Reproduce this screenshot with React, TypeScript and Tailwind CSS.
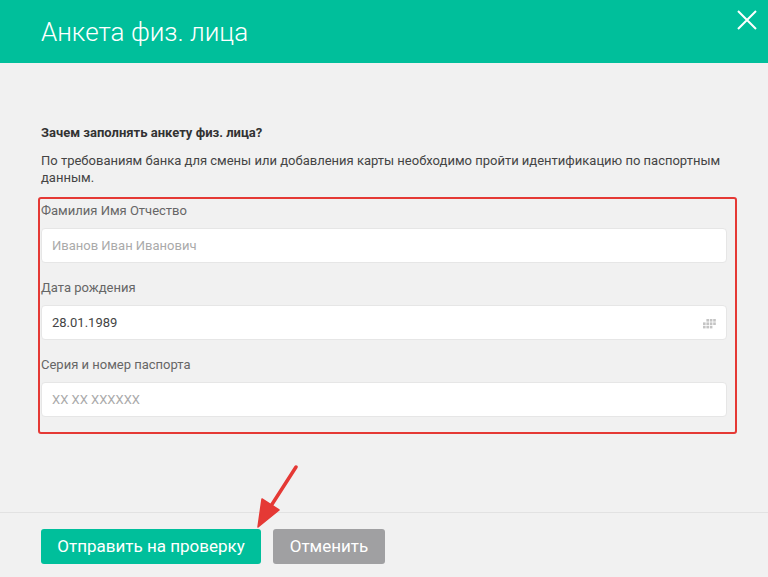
import React from "react";

function CalendarIcon() {
  const cells: [number, number][] = [
    [1, 0], [2, 0], [3, 0],
    [0, 1], [1, 1], [2, 1], [3, 1],
    [0, 2], [1, 2], [2, 2],
  ];
  return (
    <svg width="14" height="10" viewBox="0 0 14 10" className="absolute right-[9px] top-[13px]">
      {cells.map(([x, y], i) => (
        <rect key={i} x={x * 3.4} y={y * 3.4} width="2.6" height="2.6" fill="#c4c4c4" />
      ))}
    </svg>
  );
}

function Field({ label, placeholder, value, icon }: { label: string; placeholder?: string; value?: string; icon?: boolean }) {
  return (
    <div className="flex flex-col">
      <label className="text-[13px] leading-[16px] text-[#666]">{label}</label>
      <div className="relative mt-[9px] h-[35px] rounded-[4px] border border-[#e6e6e6] bg-white">
        <input
          readOnly
          placeholder={placeholder}
          defaultValue={value}
          className="h-full w-full rounded-[4px] bg-transparent pl-[10px] text-[13px] text-[#444] placeholder:text-[#aaa] outline-none"
          style={{ fontFamily: "Roboto, 'Noto Sans', sans-serif" }}
        />
        {icon && <CalendarIcon />}
      </div>
    </div>
  );
}

export default function App() {
  return (
    <div
      className="relative h-[577px] w-[768px] overflow-hidden bg-[#f1f1f1]"
      style={{ fontFamily: "Roboto, 'Noto Sans', sans-serif" }}
    >
      <header className="flex h-[63px] items-center justify-between bg-[#00bf9b] pl-[41px] pr-[11px]">
        <h1 className="text-[26px] font-light leading-none text-white">Анкета физ. лица</h1>
        <svg width="20" height="20" viewBox="0 0 20 20" className="-mt-[24px]">
          <path d="M1 1 L19 19 M19 1 L1 19" stroke="white" strokeWidth="2" />
        </svg>
      </header>

      <main className="px-[41px] pt-[62px]">
        <h2 className="text-[13px] font-bold leading-[16px] text-[#333]">Зачем заполнять анкету физ. лица?</h2>
        <p className="mt-[11px] text-[13px] leading-[17px] text-[#444]">
          По требованиям банка для смены или добавления карты необходимо пройти идентификацию по паспортным данным.
        </p>

        <div className="relative mt-[11px] flex flex-col gap-[17px] pt-[6px] pb-[17px]">
          <Field label="Фамилия Имя Отчество" placeholder="Иванов Иван Иванович" />
          <Field label="Дата рождения" value="28.01.1989" icon />
          <Field label="Серия и номер паспорта" placeholder="XX XX XXXXXX" />
          <div className="pointer-events-none absolute -left-[3px] -right-[10px] top-0 bottom-0 rounded-[3px] border-2 border-[#e53935]" />
        </div>
      </main>

      <footer className="absolute bottom-0 left-0 right-0 top-[512px] border-t border-[#e2e2e2] px-[41px] pt-[16px]">
        <div className="flex gap-[12px]">
          <button className="h-[35px] w-[220px] rounded-[3px] bg-[#00bf9b] text-[17px] text-white">
            Отправить на проверку
          </button>
          <button className="h-[35px] w-[112px] rounded-[3px] bg-[#a0a0a2] text-[17px] text-white">
            Отменить
          </button>
        </div>
      </footer>

      <svg className="pointer-events-none absolute left-0 top-0" width="768" height="577" viewBox="0 0 768 577">
        <path d="M296 467 L269 509" stroke="#e53935" strokeWidth="3.5" strokeLinecap="round" />
        <path d="M258 527 L262 499 L279 510 Z" fill="#e53935" stroke="#e53935" strokeWidth="1.5" strokeLinejoin="round" />
      </svg>
    </div>
  );
}
